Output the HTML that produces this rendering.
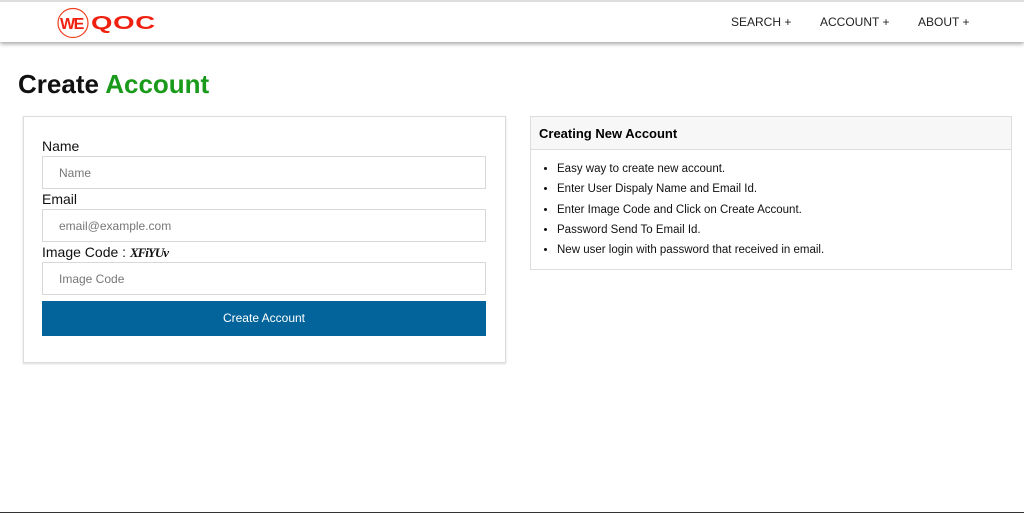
<!DOCTYPE html>
<html><head><meta charset="utf-8"><style>
*{box-sizing:border-box;margin:0;padding:0}
body{width:1024px;height:513px;background:#fff;font-family:"Liberation Sans",sans-serif;position:relative;overflow:hidden;border-bottom:1px solid #333}
.nav{position:absolute;top:0;left:0;width:1024px;height:42px;border-top:2px solid #ddd;background:#fff;box-shadow:0 2px 4px rgba(0,0,0,.35)}
.nav a{position:absolute;top:13px;font-size:12px;color:#222}
h1{position:absolute;left:18px;top:69px;font-size:26px;font-weight:bold;color:#111}
h1 span{color:#1a9a1a}
.card{position:absolute;left:23px;top:116px;width:483px;height:247px;border:1px solid #ddd;box-shadow:0 1px 2px rgba(0,0,0,.15)}
label{position:absolute;left:18px;font-size:14px;color:#111}
.in{position:absolute;left:18px;width:444px;height:33px;border:1px solid #d8d8d8;font-size:12px;color:#777;padding:9px 0 0 16px}
.btn{position:absolute;left:18px;top:184px;width:444px;height:35px;background:#03649b;color:#fff;font-size:12px;text-align:center;line-height:35px}
.side{position:absolute;left:530px;top:116px;width:482px;height:154px;border:1px solid #ddd}
.side .hd{height:33px;background:#f7f7f7;border-bottom:1px solid #ddd;font-weight:bold;font-size:13px;padding:9px 8px}
.side ul{margin:13px 0 0 26px;font-size:11.5px;color:#111}
.side li{height:20.3px}
</style></head><body>
<div class="nav">
<svg style="position:absolute;left:56px;top:5px" width="110" height="32">
<ellipse cx="17" cy="16" rx="15" ry="14.5" fill="none" stroke="#f04020" stroke-width="1.2"/>
<text x="4" y="22" font-family="Liberation Sans" font-weight="bold" font-size="16" fill="#f02010" letter-spacing="-1.5">WE</text>
<text x="0" y="0" font-family="Liberation Sans" font-weight="bold" font-size="19" fill="#f02010" transform="translate(35,22) scale(1.45,0.95)" letter-spacing="0.5">QOC</text>
</svg>
<a style="left:731px">SEARCH +</a><a style="left:820px">ACCOUNT +</a><a style="left:918px">ABOUT +</a>
</div>
<h1>Create <span>Account</span></h1>
<div class="card">
<label style="top:21px">Name</label><div class="in" style="top:39px">Name</div>
<label style="top:74px">Email</label><div class="in" style="top:92px">email@example.com</div>
<label style="top:127px">Image Code : <i style="font-family:'Liberation Serif';font-size:13px;font-weight:bold;letter-spacing:-1px">XFiYUv</i></label><div class="in" style="top:145px">Image Code</div>
<div class="btn">Create Account</div>
</div>
<div class="side"><div class="hd">Creating New Account</div>
<ul><li>Easy way to create new account.</li><li>Enter User Dispaly Name and Email Id.</li><li>Enter Image Code and Click on Create Account.</li><li>Password Send To Email Id.</li><li>New user login with password that received in email.</li></ul></div>
</body></html>
